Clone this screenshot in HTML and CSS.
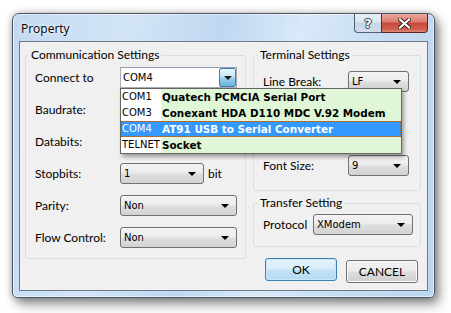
FILE: index.html
```html
<!DOCTYPE html>
<html>
<head>
<meta charset="utf-8">
<link rel="stylesheet" href="styles.css">
</head>
<body>
<div class="stage">
  <div class="window">
    <div class="titlebar">
      <span class="title">Property</span>
      <div class="caption-btns">
        <span class="cbtn help">?</span>
        <span class="cbtn close">
          <svg width="13" height="11" viewBox="0 0 13 11"><path d="M2 1.5 L11 9.5 M11 1.5 L2 9.5" stroke="#3a2020" stroke-width="4" stroke-linecap="square"/><path d="M2 1.5 L11 9.5 M11 1.5 L2 9.5" stroke="#ffffff" stroke-width="2.2" stroke-linecap="square"/></svg>
        </span>
      </div>
    </div>
    <div class="client">
      <fieldset class="group comm">
        <legend>Communication Settings</legend>
        <div class="row">
          <span class="lbl">Connect to</span>
          <div class="ecombo">
            <span class="etext">COM4</span>
            <span class="ebtn"><i class="arrow"></i></span>
            <div class="droplist">
              <div class="item"><span class="port">COM1</span><span class="desc">Quatech PCMCIA Serial Port</span></div>
              <div class="item"><span class="port">COM3</span><span class="desc">Conexant HDA D110 MDC V.92 Modem</span></div>
              <div class="item sel"><span class="port">COM4</span><span class="desc">AT91 USB to Serial Converter</span></div>
              <div class="item"><span class="port">TELNET</span><span class="desc">Socket</span></div>
            </div>
          </div>
        </div>
        <div class="row"><span class="lbl">Baudrate:</span></div>
        <div class="row"><span class="lbl">Databits:</span></div>
        <div class="row"><span class="lbl">Stopbits:</span><div class="combo w84"><span>1</span><i class="arrow"></i></div><span class="unit">bit</span></div>
        <div class="row"><span class="lbl">Parity:</span><div class="combo w117"><span>Non</span><i class="arrow"></i></div></div>
        <div class="row"><span class="lbl">Flow Control:</span><div class="combo w117"><span>Non</span><i class="arrow"></i></div></div>
      </fieldset>
      <div class="rightcol">
        <fieldset class="group term">
          <legend>Terminal Settings</legend>
          <div class="trow"><span class="tlbl">Line Break:</span><div class="combo w61"><span>LF</span><i class="arrow"></i></div></div>
          <div class="trow"></div>
          <div class="trow"></div>
          <div class="trow"><span class="tlbl">Font Size:</span><div class="combo w61"><span>9</span><i class="arrow"></i></div></div>
        </fieldset>
        <fieldset class="group transfer">
          <legend>Transfer Setting</legend>
          <div class="trow"><span class="plbl">Protocol</span><div class="combo w100"><span>XModem</span><i class="arrow"></i></div></div>
        </fieldset>
        <div class="buttons">
          <span class="pbtn ok">OK</span>
          <span class="pbtn cancel">CANCEL</span>
        </div>
      </div>
    </div>
  </div>
</div>
</body>
</html>
```
FILE: styles.css
```css
html, body { margin: 0; padding: 0; background: #ffffff; }
body { width: 451px; height: 313px; overflow: hidden; font-family: "Lato", "Open Sans", sans-serif; }

.stage { padding: 13px 0 0 12px; }

.window {
  width: 409px;
  height: 277px;
  border: 1px solid #4b5866;
  border-radius: 7px 7px 5px 5px;
  padding: 0 6px 6px 6px;
  background: linear-gradient(100deg, #c2d9f1 0%, #d3e5f7 25%, #bfd7f0 45%, #d9eaf9 62%, #c6dcf2 80%, #bdd5ee 100%);
  box-shadow: 0 0 0 1px rgba(255,255,255,0.55) inset, 4px 6px 12px rgba(0,0,0,0.45), 0 0 7px rgba(0,0,0,0.25);
  box-sizing: content-box;
  display: flex;
  flex-direction: column;
}

.titlebar {
  height: 27px;
  display: flex;
  align-items: flex-start;
  justify-content: space-between;
}
.title {
  margin: 7px 0 0 2px;
  font-size: 12px;
  line-height: 16px;
  color: #000;
  font-family: "Open Sans", sans-serif;
  text-shadow: 0 0 6px rgba(255,255,255,0.9), 0 0 3px rgba(255,255,255,0.9);
}
.caption-btns { display: flex; }
.cbtn {
  height: 19px;
  display: flex;
  align-items: center;
  justify-content: center;
  box-sizing: border-box;
  border: 1px solid #4f5f70;
  border-top: none;
}
.help {
  width: 27px;
  border-right: none;
  border-radius: 0 0 0 4px;
  background: linear-gradient(#e8eff7 0%, #dce6f1 45%, #c7d6e6 50%, #cfdcec 100%);
  color: #f4f7fb;
  font: bold 13px "DejaVu Sans", sans-serif;
  text-shadow: 0 0 1px #3d4c5c, 0 0 1px #3d4c5c, 1px 0 0 #3d4c5c, -1px 0 0 #3d4c5c, 0 1px 0 #3d4c5c, 0 -1px 0 #3d4c5c;
}
.close {
  width: 47px;
  border-radius: 0 0 4px 0;
  border-color: #5b2a24;
  background: linear-gradient(#e9a99f 0%, #dc7b6e 45%, #c8483a 50%, #d0604f 85%, #de8a78 100%);
}

.client {
  flex: 1;
  border: 1px solid #6d7b89;
  background: #f0f0f0;
  display: flex;
  align-items: flex-start;
  padding: 0 0 0 5px;
  font-size: 12px;
}

.group {
  margin: 0;
  border: 1px solid #d5dfe5;
  border-radius: 3px;
  min-width: 0;
  box-sizing: border-box;
}
.group legend {
  padding: 0 2px;
  font-size: 12px;
  line-height: 14px;
  color: #000;
}

.comm {
  margin-top: 6px;
  width: 221px;
  padding: 5px 0 10px 9px;
}
.comm legend { margin-left: -6px; }

.row {
  display: flex;
  align-items: center;
  height: 21px;
  margin-top: 11px;
}
.comm legend + .row { margin-top: 0; }
.lbl { width: 85px; flex: none; color: #000; }
.unit { margin-left: 4px; }

.combo {
  height: 21px;
  box-sizing: border-box;
  border: 1px solid #707070;
  border-radius: 3px;
  background: linear-gradient(#f3f3f3 0%, #ececec 48%, #dedede 52%, #d2d2d2 100%);
  display: flex;
  align-items: center;
  justify-content: space-between;
  padding: 0 7px 0 3px;
  font: 10px "DejaVu Sans", sans-serif;
  color: #000;
}
.w84 { width: 84px; }
.w117 { width: 117px; }
.w61 { width: 61px; }
.w100 { width: 100px; }

.arrow {
  width: 0; height: 0;
  border-left: 4px solid transparent;
  border-right: 4px solid transparent;
  border-top: 4px solid #000;
  margin-top: 1px;
}

.ecombo {
  position: relative;
  width: 117px;
  height: 21px;
  box-sizing: border-box;
  border: 1px solid #abadb3;
  border-top-color: #8e9eae;
  background: #fff;
  display: flex;
  align-items: center;
  justify-content: space-between;
  font: 10px "DejaVu Sans", sans-serif;
}
.etext { padding-left: 2px; }
.ebtn {
  width: 17px;
  height: 19px;
  box-sizing: border-box;
  border: 1px solid #3c7fb1;
  border-radius: 2px;
  background: linear-gradient(#e5f4fc 0%, #c4e5f6 48%, #98d1ef 52%, #6ab3dc 100%);
  display: flex;
  align-items: center;
  justify-content: center;
}
.ebtn .arrow { border-top-color: #1a1a1a; }

.droplist {
  position: absolute;
  left: -1px;
  top: 20px;
  width: 282px;
  box-sizing: border-box;
  border: 1px solid #646464;
  background: #fff;
  box-shadow: 2px 3px 4px rgba(0,0,0,0.35);
  z-index: 10;
}
.item {
  display: flex;
  height: 16px;
  align-items: center;
  font: 10px "DejaVu Sans", sans-serif;
  color: #000;
}
.port { width: 40px; flex: none; padding-left: 1px; box-sizing: border-box; background: #fff; height: 16px; line-height: 16px; white-space: nowrap; }
.desc { flex: 1; background: #dff7d6; height: 16px; line-height: 16px; font-weight: bold; font-size: 10.4px; padding-left: 1px; white-space: nowrap; }
.item.sel { background: #3399ff; color: #fff; outline: 1px dotted #a0602a; outline-offset: -1px; }
.item.sel .port, .item.sel .desc { background: transparent; }

.rightcol {
  margin-left: 7px;
  width: 168px;
  display: flex;
  flex-direction: column;
}
.term {
  margin-top: 6px;
  padding: 9px 0 14px 9px;
}
.term legend { margin-left: -5px; }
.trow {
  display: flex;
  align-items: center;
  height: 21px;
  margin-top: 7px;
}
.term legend + .trow, .transfer legend + .trow { margin-top: 0; }
.tlbl { width: 85px; flex: none; }
.transfer {
  margin-top: 5px;
  padding: 4px 0 11px 9px;
}
.transfer legend { margin-left: -5px; }
.plbl { width: 50px; flex: none; }

.buttons {
  display: flex;
  align-items: flex-start;
  margin-top: 11px;
  padding-left: 12px;
  gap: 9px;
}
.pbtn {
  width: 72px;
  height: 23px;
  box-sizing: border-box;
  border-radius: 3px;
  display: flex;
  align-items: center;
  justify-content: center;
  font: 12px "Lato", sans-serif;
  color: #000;
}
.ok {
  border: 1px solid #3c7fb1;
  background: linear-gradient(#e6f3fb 0%, #d7ecf8 48%, #c1e2f6 52%, #b4dbf3 100%);
  box-shadow: 0 0 0 1px #c8e6f8 inset;
}
.cancel {
  margin-top: 2px;
  border: 1px solid #707070;
  background: linear-gradient(#f2f2f2 0%, #ebebeb 48%, #dddddd 52%, #cfcfcf 100%);
  box-shadow: 0 0 0 1px #fbfbfb inset;
}
```
